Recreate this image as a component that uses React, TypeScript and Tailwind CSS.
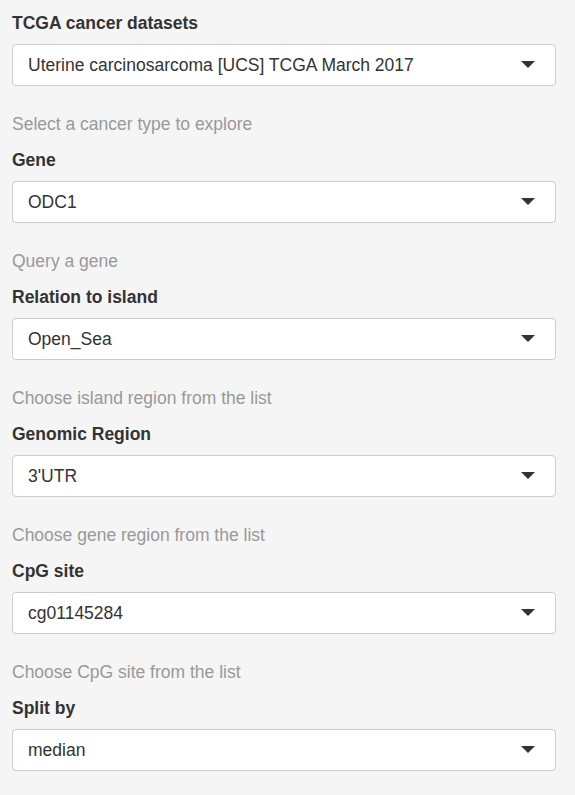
const fields = [
	{ label: "TCGA cancer datasets", value: "Uterine carcinosarcoma [UCS] TCGA March 2017", help: "Select a cancer type to explore" },
	{ label: "Gene", value: "ODC1", help: "Query a gene" },
	{ label: "Relation to island", value: "Open_Sea", help: "Choose island region from the list" },
	{ label: "Genomic Region", value: "3'UTR", help: "Choose gene region from the list" },
	{ label: "CpG site", value: "cg01145284", help: "Choose CpG site from the list" },
	{ label: "Split by", value: "median", help: "" },
]

function Select({ value }: { value: string }) {
	return (
		<div className="flex h-[42px] items-center justify-between rounded-[4px] border border-[#cccccc] bg-white pl-[15px] pr-[20px]">
			<span className="text-[17.5px] text-[#333333]">{value}</span>
			<svg width="14" height="8" viewBox="0 0 14 8">
				<path d="M0 0 L14 0 L7 7 Z" fill="#333333" />
			</svg>
		</div>
	)
}

export default function App() {
	return (
		<div className="min-h-[795px] bg-[#f5f5f5] pl-[12px] pr-[19px] pt-[11px] font-['Liberation_Sans',Arial,sans-serif]">
			{fields.map((f) => (
				<div key={f.label} className="mb-[12px]">
					<div className="mb-[9px] text-[17.5px] leading-[24px] font-bold text-[#333333]">{f.label}</div>
					<Select value={f.value} />
					{f.help && (
						<div className="mt-[26px] text-[17.5px] leading-[24px] text-[#999999]">{f.help}</div>
					)}
				</div>
			))}
		</div>
	)
}
